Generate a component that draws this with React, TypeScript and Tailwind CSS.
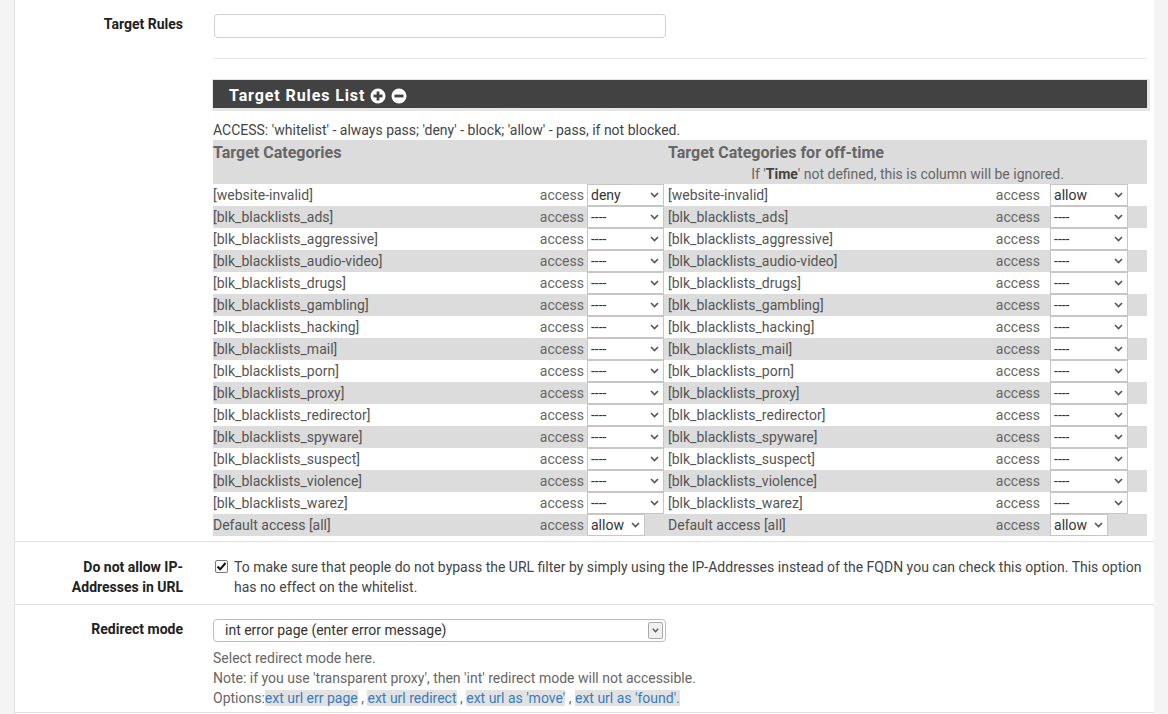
import React from "react";

const cats = [
  "website-invalid",
  "blk_blacklists_ads",
  "blk_blacklists_aggressive",
  "blk_blacklists_audio-video",
  "blk_blacklists_drugs",
  "blk_blacklists_gambling",
  "blk_blacklists_hacking",
  "blk_blacklists_mail",
  "blk_blacklists_porn",
  "blk_blacklists_proxy",
  "blk_blacklists_redirector",
  "blk_blacklists_spyware",
  "blk_blacklists_suspect",
  "blk_blacklists_violence",
  "blk_blacklists_warez",
];

function Chevron() {
  return (
    <svg width="9" height="6" viewBox="0 0 9 6" className="shrink-0">
      <polyline points="1,1 4.5,4.5 8,1" fill="none" stroke="#555" strokeWidth="1.6" />
    </svg>
  );
}

function Sel({ value, w }: { value: string; w: string }) {
  return (
    <div
      className={`${w} h-[22px] bg-white border border-[#c6c6c6] flex items-center justify-between pl-[3px] pr-[4px] text-[14px] text-[#333]`}
    >
      <span>{value}</span>
      <Chevron />
    </div>
  );
}

function CircleIcon({ plus }: { plus: boolean }) {
  return (
    <svg width="16" height="16" viewBox="0 0 16 16" className="inline-block">
      <circle cx="8" cy="8" r="7.5" fill="#fff" />
      <rect x="3.5" y="6.6" width="9" height="2.8" fill="#424242" />
      {plus && <rect x="6.6" y="3.5" width="2.8" height="9" fill="#424242" />}
    </svg>
  );
}

export default function App() {
  const font = { fontFamily: "Roboto, 'Liberation Sans', sans-serif" };
  return (
    <div className="w-[1168px] h-[714px] overflow-hidden bg-[#f4f4f4] px-[14px]" style={font}>
      <div className="w-[1140px] h-full bg-white border-l border-[#e0e0e0]">
        {/* Target Rules section */}
        <div className="flex">
          <div className="w-[183px] shrink-0 pr-[15px] pt-[14px] text-right text-[14px] leading-[20px] font-bold text-[#212121]">
            Target Rules
          </div>
          <div className="w-[949px] pl-[15px] pt-[14px]">
            <div className="ml-px w-[452px] h-[24px] border border-[#cfcfcf] rounded-[4px] bg-white" />
            <div className="mt-[20px] h-px bg-[#e8e8e8]" />
            <div className="mt-[21px] h-[28px] bg-[#424242] flex items-center pl-[16px] pt-[3px] gap-[5px] shadow-[1px_1px_0_2px_#e6e6e6]">
              <span className="text-white font-bold text-[16px] tracking-[0.9px]">Target Rules List</span>
              <CircleIcon plus={true} />
              <CircleIcon plus={false} />
            </div>
            <div className="mt-[12px] text-[14px] leading-[20px] text-[#444]">
              ACCESS: 'whitelist' - always pass; 'deny' - block; 'allow' - pass, if not blocked.
            </div>
            <table className="w-[934px] border-collapse table-fixed text-[14px] text-[#555]">
              <colgroup>
                <col className="w-[317px]" />
                <col className="w-[57px]" />
                <col className="w-[81px]" />
                <col className="w-[317px]" />
                <col className="w-[65px]" />
                <col className="w-[97px]" />
              </colgroup>
              <thead>
                <tr className="bg-[#dcdcdc] align-top">
                  <th colSpan={3} className="text-left p-0 pt-px font-bold text-[16px] leading-[24px] text-[#666]">
                    Target Categories
                  </th>
                  <th colSpan={3} className="p-0 pt-px text-left">
                    <div className="font-bold text-[16px] leading-[24px] text-[#666]">Target Categories for off-time</div>
                    <div className="text-center font-normal text-[14px] leading-[19px] text-[#666]">
                      If '<b className="text-[#444]">Time</b>' not defined, this is column will be ignored.
                    </div>
                  </th>
                </tr>
              </thead>
              <tbody>
                {cats.map((c, i) => (
                  <tr key={c} className={i % 2 === 1 ? "bg-[#dcdcdc]" : "bg-white"}>
                    <td className="p-0 h-[22px]">[{c}]</td>
                    <td className="p-0 pr-[3px] text-right text-[#666]">access</td>
                    <td className="p-0">
                      <Sel value={i === 0 ? "deny" : "----"} w="w-[77px]" />
                    </td>
                    <td className="p-0">[{c}]</td>
                    <td className="p-0 pr-[10px] text-right text-[#666]">access</td>
                    <td className="p-0">
                      <Sel value={i === 0 ? "allow" : "----"} w="w-[78px]" />
                    </td>
                  </tr>
                ))}
                <tr className="bg-[#dcdcdc]">
                  <td className="p-0 h-[22px]">Default access [all]</td>
                  <td className="p-0 pr-[3px] text-right text-[#666]">access</td>
                  <td className="p-0">
                    <Sel value="allow" w="w-[58px]" />
                  </td>
                  <td className="p-0">Default access [all]</td>
                  <td className="p-0 pr-[10px] text-right text-[#666]">access</td>
                  <td className="p-0">
                    <Sel value="allow" w="w-[58px]" />
                  </td>
                </tr>
              </tbody>
            </table>
          </div>
        </div>

        {/* IP addresses section */}
        <div className="mt-[5px] border-t border-[#e0e0e0] flex h-[63px]">
          <div className="w-[183px] shrink-0 pr-[15px] pl-[40px] pt-[15px] text-right text-[14px] leading-[20px] font-bold text-[#212121]">
            Do not allow IP-Addresses in URL
          </div>
          <div className="w-[955px] pl-[17px] pt-[15px] flex gap-[6px] text-[14px] leading-[20px] text-[#444]">
            <div className="mt-[3px] w-[13px] h-[13px] shrink-0 border border-[#777] rounded-[2px] bg-white flex items-center justify-center">
              <svg width="11" height="11" viewBox="0 0 11 11">
                <polyline points="1.5,5.5 4.2,8.3 9.5,2" fill="none" stroke="#111" strokeWidth="2" />
              </svg>
            </div>
            <div className="w-[915px]">
              To make sure that people do not bypass the URL filter by simply using the IP-Addresses instead of the FQDN you can check this option. This option has no effect on the whitelist.
            </div>
          </div>
        </div>

        {/* Redirect mode section */}
        <div className="border-t border-[#e0e0e0] border-b flex h-[109px]">
          <div className="w-[183px] shrink-0 pr-[15px] pt-[14px] text-right text-[14px] leading-[20px] font-bold text-[#212121]">
            Redirect mode
          </div>
          <div className="w-[949px] pl-[15px] pt-[14px]">
            <div className="w-[453px] h-[23px] border border-[#bdbdbd] rounded-[4px] bg-white flex items-center justify-between pl-[11px] pr-[2px] text-[14px] text-[#333]">
              <span>int error page (enter error message)</span>
              <div className="w-[15px] h-[17px] border border-[#a9a9a9] rounded-[2px] bg-[#f0f0f0] flex items-center justify-center">
                <svg width="7" height="5" viewBox="0 0 7 5">
                  <polyline points="0.8,0.8 3.5,3.8 6.2,0.8" fill="none" stroke="#555" strokeWidth="1.3" />
                </svg>
              </div>
            </div>
            <div className="mt-[6px] text-[14px] leading-[20px] text-[#666]">
              <div>Select redirect mode here.</div>
              <div>Note: if you use 'transparent proxy', then 'int' redirect mode will not accessible.</div>
              <div>
                Options:
                <span className="bg-[#e2e2e2] text-[#3a7cbf]">ext url err page</span> ,{" "}
                <span className="bg-[#e2e2e2] text-[#3a7cbf]">ext url redirect</span> ,{" "}
                <span className="bg-[#e2e2e2] text-[#3a7cbf]">ext url as 'move'</span> ,{" "}
                <span className="bg-[#e2e2e2] text-[#3a7cbf]">ext url as 'found'.</span>
              </div>
            </div>
          </div>
        </div>
      </div>
    </div>
  );
}
